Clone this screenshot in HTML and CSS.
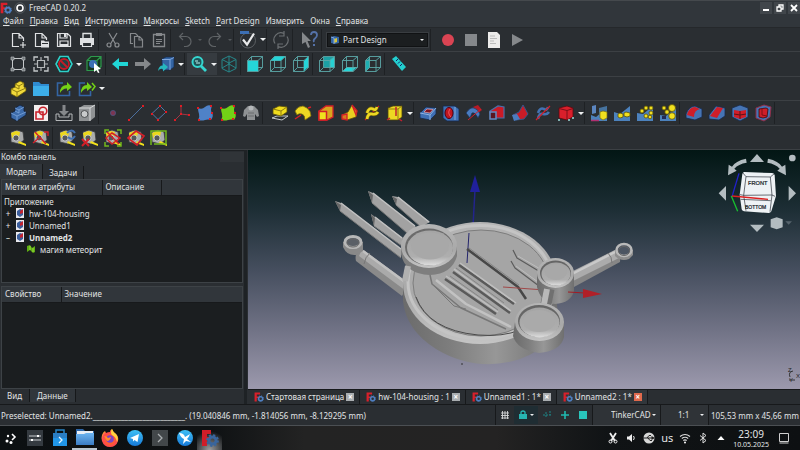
FILE: index.html
```html
<!DOCTYPE html>
<html lang="ru">
<head>
<meta charset="utf-8">
<title>FreeCAD 0.20.2</title>
<link rel="stylesheet" href="styles.css">
</head>
<body>
<svg class="defs" aria-hidden="true">
  <defs>
    <linearGradient id="sky" x1="0" y1="0" x2="0" y2="1"><stop offset="0" stop-color="#021614"/><stop offset=".25" stop-color="#1d2e35"/><stop offset=".5" stop-color="#454e5e"/><stop offset=".75" stop-color="#707285"/><stop offset="1" stop-color="#9c99ad"/></linearGradient>
    <linearGradient id="side" x1="0" y1="0" x2="1" y2="0"><stop offset="0" stop-color="#6b6b6b"/><stop offset=".3" stop-color="#7d7d7d"/><stop offset=".6" stop-color="#979797"/><stop offset="1" stop-color="#6f6f6f"/></linearGradient>
    <linearGradient id="rim" x1="0" y1="0" x2="0" y2="1"><stop offset="0" stop-color="#b5b5b5"/><stop offset=".6" stop-color="#a9a9a9"/><stop offset="1" stop-color="#c4c4c4"/></linearGradient>
    <linearGradient id="dish" x1="0" y1="0" x2="0" y2="1"><stop offset="0" stop-color="#a4a4a4"/><stop offset=".75" stop-color="#aeaeae"/><stop offset="1" stop-color="#dedede"/></linearGradient>
    <linearGradient id="orb" x1="0" y1="0" x2="0" y2="1"><stop offset="0" stop-color="#3fc0f5"/><stop offset="1" stop-color="#1679d8"/></linearGradient>
    <linearGradient id="folder" x1="0" y1="0" x2="0" y2="1"><stop offset="0" stop-color="#6db5f0"/><stop offset="1" stop-color="#3a7cc4"/></linearGradient>
    <radialGradient id="fox" cx=".5" cy=".6" r=".6"><stop offset=".2" stop-color="#ff6a1f"/><stop offset=".7" stop-color="#ff4550"/><stop offset="1" stop-color="#ffb92e"/></radialGradient>
  </defs>
  <symbol id="logo" viewBox="0 0 18 18"><path d="M1 1h10v3.500H5V8h4.500v3H5v6H1z" fill="#d8202b"/><circle cx="12" cy="12" r="3.600" fill="none" stroke="#4f7fc0" stroke-width="2.600"/><circle cx="12" cy="12" r="5" fill="none" stroke="#4f7fc0" stroke-width="1.600" stroke-dasharray="2 1.930"/></symbol>
  <symbol id="new" viewBox="0 0 18 18"><path d="M10 15.500H3.500v-13H10L14.500 7v3M10 2.500V7h4.500M14 11v6M11 14h6" fill="none" stroke="#dfe1e3" stroke-width="1.200"/></symbol>
  <symbol id="open" viewBox="0 0 18 18"><path d="M9 15.500H3.500v-13H10L14.500 7v2M10 2.500V7h4.500" fill="none" stroke="#dfe1e3" stroke-width="1.200"/><path d="M9 9.500h3l1 1h4v6H9z" fill="#dfe1e3"/><path d="M10 12.500h6" stroke="#2a2e32"/></symbol>
  <symbol id="save" viewBox="0 0 18 18"><path d="M2.500 2.500h10l3 3v10h-13zM5 2.500V7h7V2.500M5 15.500V10h8v5.500" fill="none" stroke="#dfe1e3" stroke-width="1.200"/><path d="M9 3h2v3H9zM5 13h8v2H5z" fill="#dfe1e3"/></symbol>
  <symbol id="print" viewBox="0 0 18 18"><path d="M5 7V2.500h8V7" fill="none" stroke="#dfe1e3" stroke-width="1.400"/><path d="M2 7h14v7h-2v-3H4v3H2z" fill="#dfe1e3"/><path d="M4.500 11.500h9v4h-9z" fill="none" stroke="#dfe1e3" stroke-width="1.200"/></symbol>
  <symbol id="cut" viewBox="0 0 18 18"><g fill="none" stroke="#8b8e91" stroke-width="1.200"><path d="M5 2l6.500 11M13 2L6.500 13"/><circle cx="5" cy="14" r="2"/><circle cx="13" cy="14" r="2"/></g></symbol>
  <symbol id="copy" viewBox="0 0 18 18"><path d="M6 12.500H3.500v-10h5L11 5M7.500 5.500h5l3 3v7.500h-8zM12 5.500V9h3.500" fill="none" stroke="#85888b" stroke-width="1.200"/></symbol>
  <symbol id="paste" viewBox="0 0 18 18"><path d="M3.500 3.500h11v12h-11z" fill="none" stroke="#85888b" stroke-width="1.300"/><path d="M6 2h6v3H6zM6 8h6v1H6zM6 10h6v1H6zM6 12h4v1H6z" fill="#85888b"/></symbol>
  <symbol id="undo" viewBox="0 0 18 18"><path d="M7 2L3.500 5.500 7 9M3.500 5.500H10a5 5 0 010 10H8" fill="none" stroke="#5f6366" stroke-width="1.200"/></symbol>
  <symbol id="redo" viewBox="0 0 18 18"><path d="M11 2l3.500 3.500L11 9M14.500 5.500H8a5 5 0 000 10h2" fill="none" stroke="#5f6366" stroke-width="1.200"/></symbol>
  <symbol id="check" viewBox="0 0 18 18"><circle cx="9" cy="9.500" r="7.500" fill="none" stroke="#5c6064"/><path d="M1 1.500h9" stroke="#3c6fb4" stroke-width="3"/><path d="M4 8.500l4 5 7-11" fill="none" stroke="#e9eaeb" stroke-width="2.200"/></symbol>
  <symbol id="refresh" viewBox="0 0 18 18"><path d="M3 12.500A7 7 0 0112 2.500M15 5.500a7 7 0 01-9 10M12 0v5h-5M6 18v-5h5" fill="none" stroke="#6b6f72" stroke-width="1.200"/></symbol>
  <symbol id="whats" viewBox="0 0 18 18"><path d="M1 1l9 9H6.500l2.500 6-2 1-2.500-6L1 13z" fill="#85888b"/><path d="M10 4q0-3 3-3t3 3q0 2-2 3.500T13 11" fill="none" stroke="#5572a8" stroke-width="1.800"/><path d="M12 13h2v2h-2z" fill="#5572a8"/></symbol>
  <symbol id="rec" viewBox="0 0 18 18"><circle cx="9" cy="9" r="6" fill="#da4453"/></symbol>
  <symbol id="stop" viewBox="0 0 18 18"><path d="M3 3h12v12H3z" fill="#85888b"/></symbol>
  <symbol id="macro" viewBox="0 0 18 18"><path d="M3 1h9l3 3v13H3z" fill="#ecebea"/><path d="M5 5h5M5 7.500h7M5 10h4M5 12.500h6" stroke="#bbb"/></symbol>
  <symbol id="play" viewBox="0 0 18 18"><path d="M4 3l11 6-11 6z" fill="#85888b"/></symbol>

  <symbol id="fit" viewBox="0 0 18 18"><path d="M3.500 3.500h11v11h-11z" fill="none" stroke="#c4c7c9"/><path d="M2 2h3v3H2zM13 2h3v3h-3zM2 13h3v3H2zM13 13h3v3h-3z" fill="#6f7578" stroke="#c4c7c9" stroke-width=".6"/></symbol>
  <symbol id="fitsel" viewBox="0 0 18 18"><path d="M2 6V2h4M12 2h4v4M16 12v4h-4M6 16H2v-4" fill="none" stroke="#c4c7c9" stroke-width="1.300"/><path d="M5.500 5.500h7v7h-7zM9 2v3M9 13v3M2 9h3M13 9h3" fill="none" stroke="#b4b7b9" stroke-width="1.200"/></symbol>
  <symbol id="draw" viewBox="0 0 18 18"><path d="M5 1.500h8L17 9l-4 7.500H5L1 9z" fill="#0d2a2b" stroke="#2fd0c8" stroke-width="1.600"/><circle cx="9" cy="9" r="5" fill="#1f4345" stroke="#c01c28" stroke-width="1.800"/><path d="M5.500 5.500l7 7" stroke="#c01c28" stroke-width="2"/></symbol>
  <symbol id="bbox" viewBox="0 0 18 18"><path d="M2 5.500h10v10H2zM2 5.500l4-4h10v10l-4 4M12 5.500l4-4" fill="#17351f" stroke="#2d9a4c" stroke-width="1.200"/><circle cx="8" cy="9" r="4" fill="#3c6fb4"/><path d="M9 8l7 6-3 .5 1.500 3-1.500.5-1.500-3L9 17z" fill="#fff"/></symbol>
  <symbol id="left" viewBox="0 0 18 18"><path d="M1 9l7-6v4h9v4H8v4z" fill="#20d6d6"/></symbol>
  <symbol id="right" viewBox="0 0 18 18"><path d="M17 9l-7-6v4H1v4h9v4z" fill="#85888b"/></symbol>
  <symbol id="goto" viewBox="0 0 18 18"><path d="M5 4l4-2h8v10l-4 3H5z" fill="#3465a4" stroke="#14284a" stroke-width=".7"/><path d="M5 4.500h8l4-2M13 4.500V15" fill="none" stroke="#7fa6dc"/><path d="M1 16q1-6 5-5.500V8l5 4-5 4.500V14q-3-1-5 2z" fill="#26b7bd"/></symbol>
  <symbol id="zoomv" viewBox="0 0 18 18"><circle cx="7.500" cy="7" r="5" fill="#1f5558" stroke="#35d6cf" stroke-width="2"/><path d="M11 11l5 5" stroke="#35d6cf" stroke-width="2.800"/><path d="M5 6h3M6 8h4" stroke="#b9f3f0"/></symbol>
  <symbol id="iso" viewBox="0 0 18 18"><path d="M9 1l7 3.500v9L9 17l-7-3.500v-9zM2 4.500L9 8l7-3.500M9 8v9M9 1v8l-7 4M9 9l7 4" fill="none" stroke="#27878a"/></symbol>
  <symbol id="wire" viewBox="0 0 18 18"><path d="M1.500 5.500h10.500v11H1.500zM1.500 5.500l4-4h11v11l-4.500 4M12 5.500l4.500-4M5.500 1.500v11h11M1.500 16.500l4-4" fill="none" stroke="#5ba8a8" stroke-width=".9"/></symbol>
  <symbol id="front" viewBox="0 0 18 18"><use href="#wire"/><path d="M2 6h10v10H2z" fill="#25d5d8"/></symbol>
  <symbol id="top" viewBox="0 0 18 18"><use href="#wire"/><path d="M2 5.500l4-4h10l-4 4z" fill="#25d5d8"/></symbol>
  <symbol id="rside" viewBox="0 0 18 18"><use href="#wire"/><path d="M12 6l4-4v10l-4 4z" fill="#25d5d8"/></symbol>
  <symbol id="rear" viewBox="0 0 18 18"><path d="M6 2h10v10H6z" fill="#1ca0a4"/><path d="M12 5l4-3v10h-4z" fill="#27d0d2"/><use href="#wire"/></symbol>
  <symbol id="bottom" viewBox="0 0 18 18"><path d="M2 16l4-4h10l-4 4z" fill="#25d5d8"/><use href="#wire"/></symbol>
  <symbol id="lside" viewBox="0 0 18 18"><path d="M2 6l4-4v10l-4 4z" fill="#1eafb2"/><use href="#wire"/></symbol>
  <symbol id="ruler" viewBox="0 0 18 18"><path d="M2 4l4-3 10 11-4 4z" fill="#23cfcf"/><path d="M6 6l2-2M8 8.500l2-2M10 11l2-2" stroke="#126"/></symbol>

  <symbol id="part" viewBox="0 0 18 18"><path d="M2 9l4-2V4l5-3 4 2v4l2 1v3l-9 6-6-3z" fill="#f1d93a" stroke="#5d5208" stroke-width=".8"/><path d="M2 9l6 3 9-4M8 12v5M6 4l4 2 5-3M10 6v3l-4-2" fill="none" stroke="#8f7d10"/></symbol>
  <symbol id="group" viewBox="0 0 18 18"><path d="M1 2h6l2 2h8v12H1z" fill="#2f8bd0"/><path d="M1 6h16v10H1z" fill="#3daee9"/></symbol>
  <symbol id="link" viewBox="0 0 18 18"><path d="M8 3H2.500v12.500h12V11" fill="none" stroke="#3465a4" stroke-width="1.600"/><path d="M5 13q0-8 7-8V2l5 5-5 4V8.500Q8 8 5 13z" fill="#73d216"/></symbol>
  <symbol id="link2" viewBox="0 0 18 18"><path d="M7 3H1.500v12.500h11V11" fill="none" stroke="#3465a4" stroke-width="1.600"/><path d="M3 13q0-8 6-8V2l5 5-5 4V8.500Q6 8 3 13z" fill="#73d216"/><path d="M14 3l3 3.500-3 4" fill="none" stroke="#73d216" stroke-width="1.500"/></symbol>

  <symbol id="body" viewBox="0 0 18 18"><path d="M2 9l4-2V4l5-3 4 2v4l2 1v3l-9 6-6-3z" fill="#3d6cab" stroke="#10203a" stroke-width=".8"/><path d="M2 9l6 3 9-4M8 12v5M6 4l4 2 5-3M10 6v3l-4-2" fill="none" stroke="#7ea6db" stroke-width=".8"/></symbol>
  <symbol id="sketch" viewBox="0 0 18 18"><path d="M2 1h14v16H2z" fill="#f2eeee"/><path d="M4 8h7v7H4z" fill="none" stroke="#c8202a" stroke-width="1.600"/><circle cx="11" cy="7" r="3.800" fill="none" stroke="#c8202a" stroke-width="1.600"/></symbol>
  <symbol id="import" viewBox="0 0 18 18"><path d="M1 10v6.500h16V10h-3v3H4v-3z" fill="none" stroke="#b4b7b9"/><path d="M7.500 1h3v6H14l-5 5-5-5h3.500z" fill="#85888b"/></symbol>
  <symbol id="shapes" viewBox="0 0 18 18"><path d="M1 4l5-3h11v12l-5 4H1z" fill="#8f9294"/><path d="M1 4h11v13M12 4l5-3" fill="none" stroke="#d6d8d9"/><circle cx="6.500" cy="10" r="3.500" fill="#c8cacb" stroke="#4d5052"/></symbol>
  <symbol id="point" viewBox="0 0 18 18"><circle cx="9" cy="9" r="2.600" fill="#7c3552" stroke="#4a5a88" stroke-width=".7"/></symbol>
  <symbol id="line" viewBox="0 0 18 18"><path d="M2 16L16 2" stroke="#4c6f9e"/><path d="M1 15h2v2H1zM15 1h2v2h-2z" fill="#e01b24"/></symbol>
  <symbol id="plane" viewBox="0 0 18 18"><path d="M2 9.500L10 2l6 6-8 7.500z" fill="none" stroke="#5277a6"/><path d="M1 9h2v2H1zM9 1h2v2H9zM15 7h2v2h-2zM7 15h2v2H7z" fill="#e01b24"/></symbol>
  <symbol id="axes" viewBox="0 0 18 18"><path d="M8 2v8l8 1M8 10l-6 6" fill="none" stroke="#a33644"/><path d="M7 1h2v2H7zM15 10h2v2h-2zM1 15h2v2H1zM7 9h2v2H7z" fill="#e01b24"/></symbol>
  <symbol id="blob" viewBox="0 0 18 18"><path d="M2 4q4 2 7-1t7-1q-2 4 0 7t-1 7q-3-1-6 0t-7 0q2-3 1-6t-1-6z"/><path d="M1 3h2v2H1zM14 1h2v2h-2zM15 8h2v2h-2zM2 15h2v2H2zM13 14h2v2h-2z" fill="#e01b24"/></symbol>
  <symbol id="clone" viewBox="0 0 18 18"><path d="M6 2h6l4 4 1 6-2 1-2-3v6H5v-6l-2 3-2-1 1-6z" fill="#8e9193"/><circle cx="9" cy="4" r="2.500" fill="#b5b8ba"/><path d="M6 9h6M6 12h6" stroke="#6a6d6f"/></symbol>

  <symbol id="pad" viewBox="0 0 18 18"><path d="M1 14l5-2h11l-6 4z" fill="none" stroke="#c3c7ca"/><path d="M2 5l6-3 8 1v5l-6 4-8-2z" fill="#f0dc1e" stroke="#5d5208" stroke-width=".8"/><path d="M2 5l8 2 6-4M10 7v5" fill="none" stroke="#8f7d10"/></symbol>
  <symbol id="revolve" viewBox="0 0 18 18"><path d="M1 15l6-4M14 4l3-1" stroke="#d21f28" stroke-width="1.400"/><path d="M1 7q3-5 8-5l4 2q4 3 4 8l-6 4q0-5-3-6-3-1-5 1z" fill="#edd823" stroke="#7e6c0b" stroke-width=".8"/></symbol>
  <symbol id="loft" viewBox="0 0 18 18"><path d="M2 7l7-5h7v11l-6 3H2z" fill="#d9a51f" stroke="#d21f28" stroke-width="1.300"/><path d="M2 7.500h7.500V16H2z" fill="#f0e21e" stroke="#d21f28" stroke-width="1.500"/></symbol>
  <symbol id="pipe" viewBox="0 0 18 18"><path d="M2 11l6-3 4-7 5 6-1 6-9 3-5-1z" fill="#e9cf22" stroke="#5d4a08" stroke-width=".7"/><path d="M2 11l5-1v6l-5-1zM12 1l5 6-1 4z" fill="#d9781f" stroke="#d21f28" stroke-width="1.300"/></symbol>
  <symbol id="helix" viewBox="0 0 18 18"><path d="M2 16L16 2" stroke="#d21f28" stroke-width="1.300"/><path d="M4 9q2-6 6-4 3 2 4-2M4 15q1-6 5-5t6-2" fill="none" stroke="#6d600a" stroke-width="3.800"/><path d="M4 9q2-6 6-4 3 2 4-2M4 15q1-6 5-5t6-2" fill="none" stroke="#edd823" stroke-width="2.600"/></symbol>
  <symbol id="cubeadd" viewBox="0 0 18 18"><path d="M2 4l5-2h9v11l-4 3H2z" fill="#edd823" stroke="#4d4408" stroke-width=".8"/><path d="M2 5h10v11M12 5l4-3" fill="none" stroke="#8f7d10"/><path d="M10 3v9M1 16l3-2M13 15l3 2" fill="none" stroke="#c22030" stroke-width="1.500"/></symbol>
  <symbol id="pocket" viewBox="0 0 18 18"><path d="M1 9l6-6 10 1v6l-6 6-10-2z" fill="#3f70b5" stroke="#16294a" stroke-width=".8"/><path d="M1 9l10 2 6-7M11 11v5" fill="none" stroke="#8db2e0"/><path d="M5 8l3-3 6 .5-3 3.500z" fill="#7e1420" stroke="#fbb" stroke-width=".6"/></symbol>
  <symbol id="hole" viewBox="0 0 18 18"><path d="M1 2h12l4 3v12H5l-4-3z" fill="#3f70b5" stroke="#16294a" stroke-width=".8"/><path d="M13 3v13" stroke="#85abdc"/><ellipse cx="7" cy="9" rx="4" ry="5.500" fill="#c11620" stroke="#501"/><path d="M8 5q-3 4 1 8" fill="none" stroke="#ef5560"/></symbol>
  <symbol id="groove" viewBox="0 0 18 18"><path d="M8 3l5-2 4 5-5 4z" fill="#b51a26"/><path d="M1 9q4-6 8-5 4 1 6 6l-2 4q-3-6-6-5l-2 5z" fill="#4a7cc0" stroke="#1a3258" stroke-width=".7"/><path d="M3 16L16 5" stroke="#d21f28"/></symbol>
  <symbol id="sloft" viewBox="0 0 18 18"><path d="M2 7l8-5 6 1v11H3z" fill="#cb1a26" stroke="#4a6fa8" stroke-width="1.200"/><path d="M2 8h6v7H2z" fill="#5b1520" stroke="#648ac4" stroke-width="1.500"/></symbol>
  <symbol id="spipe" viewBox="0 0 18 18"><path d="M2 11l6-3 4-7 5 9-4 5-8 1z" fill="#c81c27" stroke="#34568c"/><path d="M1 11l5-1 3 5-6 2z" fill="#4a7cc0"/></symbol>
  <symbol id="shelix" viewBox="0 0 18 18"><path d="M4 9q2-6 6-4 3 2 4-2M4 15q1-6 5-5t6-2" fill="none" stroke="#4272b2" stroke-width="2.600"/><path d="M2 16L16 2" stroke="#d21f28" stroke-width="1.300"/></symbol>
  <symbol id="cubesub" viewBox="0 0 18 18"><path d="M2 4l8-2 6 2v9l-6 3-8-2z" fill="#d91f2b" stroke="#5a0a10" stroke-width=".8"/><path d="M2 4.500l8 2 6-2M10 6.500V16" fill="none" stroke="#7a1018"/><path d="M1 15h2v2H1zM11 15h2v2h-2zM15 13h2v2h-2z" fill="#7fb0b0"/></symbol>
  <symbol id="base" viewBox="0 0 18 18"><path d="M1 17v-6l5 2 6-5 5-1v10z" fill="#4c82bd"/><path d="M9 4l8-2v8H9z" fill="#46739f"/><path d="M2 2l4-1v8L2 10z" fill="#5b86c0"/></symbol>
  <symbol id="mirror" viewBox="0 0 18 18"><use href="#base"/><path d="M1 16.500h8" stroke="#b03070" stroke-width="1.500"/><path d="M10 8l3-1 4 1v6l-4 2-3-2z" fill="#f1e01f" stroke="#7c6d08" stroke-width=".7"/></symbol>
  <symbol id="linpat" viewBox="0 0 18 18"><path d="M1 17V8l6 2 10-8v15z" fill="#4c82bd"/><path d="M5 10l2-1 3 1v3l-3 1-2-1zM11 9l2-1 4 1v3l-3 1-3-1z" fill="#f1e01f" stroke="#5d5208" stroke-width=".8"/></symbol>
  <symbol id="polpat" viewBox="0 0 18 18"><path d="M1 17V9l6 1 10-8v15z" fill="#4c82bd"/><g fill="#f1e01f" stroke="#5d5208" stroke-width=".8"><circle cx="6" cy="7" r="2"/><circle cx="10" cy="4" r="2"/><circle cx="15" cy="4" r="2"/><circle cx="15" cy="9" r="2"/><circle cx="10" cy="12" r="2"/><circle cx="14" cy="13" r="1.800"/></g></symbol>
  <symbol id="multi" viewBox="0 0 18 18"><path d="M1 17v-6l6 1 10-8v13z" fill="#4c82bd"/><g fill="#f1e01f" stroke="#5d5208" stroke-width=".8"><circle cx="13" cy="4" r="3.500"/><circle cx="5" cy="4" r="2"/><circle cx="8" cy="8" r="2.200"/><circle cx="13" cy="12" r="3.300"/></g><path d="M3 12h4v3H3z" fill="#222a55"/></symbol>
  <symbol id="fillet" viewBox="0 0 18 18"><path d="M1 10q3-8 9-8l7 3v8l-7 3-9-2z" fill="#4674b4" stroke="#17294a" stroke-width=".8"/><path d="M2 11q2-8 8-8l5 2q-6 1-6 8z" fill="#cf1e29"/></symbol>
  <symbol id="chamfer" viewBox="0 0 18 18"><path d="M1 11l7-9 9 2v8l-6 4-10-1z" fill="#4674b4" stroke="#17294a" stroke-width=".8"/><path d="M2 12l7-9 6 1-6 10z" fill="#cf1e29"/></symbol>
  <symbol id="draft" viewBox="0 0 18 18"><path d="M1 4l8-3 8 3v9l-8 4-8-4z" fill="#4674b4" stroke="#17294a" stroke-width=".8"/><path d="M3 6l6 1 6-1v7l-6 2-6-2z" fill="#cf1e29"/><path d="M9 7v8M3 10l6 1 6-1" stroke="#5d1016" fill="none"/></symbol>
  <symbol id="thick" viewBox="0 0 18 18"><path d="M2 4l8-3 7 2-1 10-6 4-8-3z" fill="#4674b4" stroke="#9a2a44" stroke-width=".9"/><path d="M5 5l7-1 2 1-1 8-4 1-4-1z" fill="#cf1e29" stroke="#3a0a10" stroke-width=".8"/><path d="M8 4v7l5 1" stroke="#7a1018" fill="none"/></symbol>

  <symbol id="tape" viewBox="0 0 18 18"><path d="M2 3l6-2 6 2 1 8-5 4-8-2z" fill="#a9abac" stroke="#383a3c" stroke-width=".8"/><path d="M2 4l5-2 4 1-1 5-7 1z" fill="#ecd81c"/><circle cx="7" cy="9" r="3" fill="#55585a" stroke="#ddd" stroke-width=".7"/><path d="M10 12l7 3v2l-8-3z" fill="#f2e21c"/></symbol>
  <symbol id="tapeang" viewBox="0 0 18 18"><use href="#tape"/><path d="M3 3l11 12M1 14l6-5M12 3h4v4" fill="none" stroke="#d21f28" stroke-width="1.400"/></symbol>
  <symbol id="taperef" viewBox="0 0 18 18"><use href="#tape"/><path d="M9 4q5-5 8 0M17 7q-3 5-7 1" fill="none" stroke="#4272b2" stroke-width="2"/></symbol>
  <symbol id="tapedel" viewBox="0 0 18 18"><use href="#tape"/><path d="M1 10l7 7M8 10l-7 7" stroke="#d21f28" stroke-width="2"/></symbol>
  <symbol id="tapeall" viewBox="0 0 18 18"><use href="#tape"/><path d="M1 5V1h4M13 1h4v4M17 13v4h-4M5 17H1v-4" fill="none" stroke="#73b81c" stroke-width="1.500"/><path d="M2 9l6-5 8 5-8 6zM3 3l12 12" fill="none" stroke="#d21f28" stroke-width="1.500"/></symbol>
  <symbol id="tape3d" viewBox="0 0 18 18"><use href="#tape"/><path d="M1 9l8-7 8 5-7 9z" fill="none" stroke="#d21f28" stroke-width="1.700"/></symbol>
  <symbol id="tapedelta" viewBox="0 0 18 18"><use href="#tape"/><path d="M1 16V2h15v13H4" fill="none" stroke="#73b81c" stroke-width="1.500"/></symbol>

  <symbol id="doc" viewBox="0 0 10 10"><path d="M1 0h8v10H1z" fill="#e9e9ee"/><path d="M2 3l3-2 3 1v5L5 9 2 7z" fill="#3d5f9d"/><path d="M5 3l3-2v4L5 6z" fill="#c32431"/></symbol>
  <symbol id="mesh" viewBox="0 0 10 10"><path d="M1 2l3-1 2 3 3-2v6L7 9 4 6 1 8z" fill="#5fae12"/><path d="M4 2v4M7 4v4" stroke="#a9e653" stroke-width=".8"/></symbol>
</svg>

<header class="titlebar">
  <svg class="ic12"><use href="#logo"/></svg>
  <svg class="ic12" viewBox="0 0 12 12"><circle cx="6" cy="6" r="3" fill="none" stroke="#fff" stroke-width="1.600"/><circle cx="6" cy="6" r="5.300" fill="none" stroke="#50565b"/></svg>
  <h1>FreeCAD 0.20.2</h1>
  <div class="winbtns">
    <button aria-label="Свернуть"><svg viewBox="0 0 12 12"><path d="M3 8h6" stroke="#fff" stroke-width="2"/></svg></button>
    <button aria-label="Восстановить"><svg viewBox="0 0 12 12"><path d="M5 4.500V3h4v4H7.500M3 5h4v4H3z" fill="none" stroke="#fff" stroke-width="1.300"/></svg></button>
    <button aria-label="Закрыть"><svg viewBox="0 0 12 12"><path d="M3 3l6 6M9 3l-6 6" stroke="#fff" stroke-width="1.800"/></svg></button>
  </div>
</header>

<nav class="menubar">
  <button><u>Ф</u>айл</button><button><u>П</u>равка</button><button><u>В</u>ид</button><button><u>И</u>нструменты</button><button><u>М</u>акросы</button><button><u>S</u>ketch</button><button><u>P</u>art Design</button><button>Измерить</button><button>Окна</button><button><u>С</u>правка</button>
</nav>

<section class="toolbars">
  <div class="row">
    <button class="tb" aria-label="Создать"><svg><use href="#new"/></svg></button>
    <button class="tb" aria-label="Открыть"><svg><use href="#open"/></svg></button>
    <button class="tb" aria-label="Сохранить"><svg><use href="#save"/></svg></button>
    <button class="tb" aria-label="Печать"><svg><use href="#print"/></svg></button>
    <i class="sep"></i>
    <button class="tb" aria-label="Вырезать"><svg><use href="#cut"/></svg></button>
    <button class="tb" aria-label="Копировать"><svg><use href="#copy"/></svg></button>
    <button class="tb" aria-label="Вставить"><svg><use href="#paste"/></svg></button>
    <i class="sep"></i>
    <button class="tb" aria-label="Отменить"><svg><use href="#undo"/></svg></button><button class="drop dim" aria-label="История отмены"></button>
    <button class="tb" aria-label="Повторить"><svg><use href="#redo"/></svg></button><button class="drop dim" aria-label="История повтора"></button>
    <i class="sep"></i>
    <button class="tb" aria-label="Правка"><svg><use href="#check"/></svg></button><button class="drop" aria-label="Режим правки"></button>
    <i class="sep"></i>
    <button class="tb" aria-label="Обновить"><svg><use href="#refresh"/></svg></button>
    <i class="grip"></i>
    <button class="tb" aria-label="Что это?"><svg><use href="#whats"/></svg></button>
    <i class="grip"></i>
    <div class="combo">
      <svg class="ic10" viewBox="0 0 10 10"><path d="M1 2l3-1 5 1v6L5 9 1 8z" fill="#3465a4"/><path d="M4 4l3-1v4L4 8z" fill="#d9c63a"/><path d="M1 2l3 1v6" fill="none" stroke="#7fa6dc"/></svg>
      <select aria-label="Верстак"><option>Part Design</option></select>
    </div>
    <i class="grip"></i>
    <button class="tb" aria-label="Запись макроса"><svg><use href="#rec"/></svg></button>
    <button class="tb" aria-label="Остановить"><svg><use href="#stop"/></svg></button>
    <button class="tb" aria-label="Макросы"><svg><use href="#macro"/></svg></button>
    <button class="tb" aria-label="Выполнить"><svg><use href="#play"/></svg></button>
  </div>
  <div class="row">
    <button class="tb" aria-label="Показать всё"><svg><use href="#fit"/></svg></button>
    <button class="tb" aria-label="Показать выделенное"><svg><use href="#fitsel"/></svg></button>
    <button class="tb" aria-label="Стиль"><svg><use href="#draw"/></svg></button><button class="drop" aria-label="Выбор стиля"></button>
    <button class="tb" aria-label="Габариты"><svg><use href="#bbox"/></svg></button>
    <i class="sep"></i>
    <button class="tb" aria-label="Назад"><svg><use href="#left"/></svg></button>
    <button class="tb" aria-label="Вперёд"><svg><use href="#right"/></svg></button>
    <button class="tb" aria-label="К объекту"><svg><use href="#goto"/></svg></button><button class="drop" aria-label="Переходы"></button>
    <i class="sep"></i>
    <button class="tb on" aria-label="Синхронизация"><svg><use href="#zoomv"/></svg></button><button class="drop on" aria-label="Режим синхронизации"></button>
    <button class="tb" aria-label="Изометрия"><svg><use href="#iso"/></svg></button>
    <i class="sep"></i>
    <button class="tb" aria-label="Спереди"><svg><use href="#front"/></svg></button>
    <button class="tb" aria-label="Сверху"><svg><use href="#top"/></svg></button>
    <button class="tb" aria-label="Справа"><svg><use href="#rside"/></svg></button>
    <i class="sep"></i>
    <button class="tb" aria-label="Сзади"><svg><use href="#rear"/></svg></button>
    <button class="tb" aria-label="Снизу"><svg><use href="#bottom"/></svg></button>
    <button class="tb" aria-label="Слева"><svg><use href="#lside"/></svg></button>
    <i class="sep"></i>
    <button class="tb" aria-label="Расстояние"><svg><use href="#ruler"/></svg></button>
  </div>
  <div class="row">
    <button class="tb" aria-label="Деталь"><svg><use href="#part"/></svg></button>
    <button class="tb" aria-label="Группа"><svg><use href="#group"/></svg></button>
    <button class="tb" aria-label="Ссылка"><svg><use href="#link"/></svg></button>
    <button class="tb" aria-label="Действия"><svg><use href="#link2"/></svg></button><button class="drop" aria-label="Действия со ссылкой"></button>
  </div>
  <div class="row">
    <button class="tb" aria-label="Тело"><svg><use href="#body"/></svg></button>
    <button class="tb" aria-label="Эскиз"><svg><use href="#sketch"/></svg></button>
    <button class="tb" aria-label="Прикрепить"><svg><use href="#import"/></svg></button>
    <button class="tb" aria-label="Проверить"><svg><use href="#shapes"/></svg></button>
    <i class="sep"></i>
    <button class="tb" aria-label="Точка"><svg><use href="#point"/></svg></button>
    <button class="tb" aria-label="Линия"><svg><use href="#line"/></svg></button>
    <button class="tb" aria-label="Плоскость"><svg><use href="#plane"/></svg></button>
    <button class="tb" aria-label="Оси"><svg><use href="#axes"/></svg></button>
    <button class="tb blue" aria-label="Связка"><svg><use href="#blob"/></svg></button>
    <button class="tb green" aria-label="Подсвязка"><svg><use href="#blob"/></svg></button>
    <button class="tb" aria-label="Клон"><svg><use href="#clone"/></svg></button>
    <i class="grip"></i>
    <button class="tb" aria-label="Выдавить"><svg><use href="#pad"/></svg></button>
    <button class="tb" aria-label="Вращение"><svg><use href="#revolve"/></svg></button>
    <button class="tb" aria-label="Лофт"><svg><use href="#loft"/></svg></button>
    <button class="tb" aria-label="Труба"><svg><use href="#pipe"/></svg></button>
    <button class="tb" aria-label="Спираль"><svg><use href="#helix"/></svg></button>
    <button class="tb" aria-label="Примитив"><svg><use href="#cubeadd"/></svg></button><button class="drop" aria-label="Примитивы"></button>
    <i class="sep"></i>
    <button class="tb" aria-label="Карман"><svg><use href="#pocket"/></svg></button>
    <button class="tb" aria-label="Отверстие"><svg><use href="#hole"/></svg></button>
    <button class="tb" aria-label="Канавка"><svg><use href="#groove"/></svg></button>
    <button class="tb" aria-label="Вычесть лофт"><svg><use href="#sloft"/></svg></button>
    <button class="tb" aria-label="Вычесть трубу"><svg><use href="#spipe"/></svg></button>
    <button class="tb" aria-label="Вычесть спираль"><svg><use href="#shelix"/></svg></button>
    <button class="tb" aria-label="Вычесть примитив"><svg><use href="#cubesub"/></svg></button><button class="drop" aria-label="Вычитаемые примитивы"></button>
    <i class="sep"></i>
    <button class="tb" aria-label="Симметрия"><svg><use href="#mirror"/></svg></button>
    <button class="tb" aria-label="Линейный массив"><svg><use href="#linpat"/></svg></button>
    <button class="tb" aria-label="Круговой массив"><svg><use href="#polpat"/></svg></button>
    <button class="tb" aria-label="Множественное"><svg><use href="#multi"/></svg></button>
    <i class="sep"></i>
    <button class="tb" aria-label="Скругление"><svg><use href="#fillet"/></svg></button>
    <button class="tb" aria-label="Фаска"><svg><use href="#chamfer"/></svg></button>
    <button class="tb" aria-label="Уклон"><svg><use href="#draft"/></svg></button>
    <button class="tb" aria-label="Толщина"><svg><use href="#thick"/></svg></button>
    <i class="sep"></i>
  </div>
  <div class="row">
    <button class="tb" aria-label="Линейное измерение"><svg><use href="#tape"/></svg></button>
    <button class="tb" aria-label="Угловое измерение"><svg><use href="#tapeang"/></svg></button>
    <i class="sep"></i>
    <button class="tb" aria-label="Обновить измерения"><svg><use href="#taperef"/></svg></button>
    <button class="tb" aria-label="Очистить измерения"><svg><use href="#tapedel"/></svg></button>
    <button class="tb" aria-label="Переключить всё"><svg><use href="#tapeall"/></svg></button>
    <button class="tb" aria-label="Переключить 3D"><svg><use href="#tape3d"/></svg></button>
    <button class="tb" aria-label="Переключить дельту"><svg><use href="#tapedelta"/></svg></button>
  </div>
</section>

<main class="work">
  <aside class="panel">
    <div class="panelhead"><h2>Комбо панель</h2><span class="dock"></span></div>
    <div class="tabs"><button class="cur">Модель</button><button>Задачи</button></div>
    <div class="tree">
      <table>
        <thead><tr><th class="c1">Метки и атрибуты</th><th class="c2">Описание</th><th></th></tr></thead>
        <tbody>
          <tr><td colspan="3">Приложение</td></tr>
          <tr><td colspan="3"><span class="node"><b class="tw">+</b><svg class="ic10"><use href="#doc"/></svg>hw-104-housing</span></td></tr>
          <tr><td colspan="3"><span class="node"><b class="tw">+</b><svg class="ic10"><use href="#doc"/></svg>Unnamed1</span></td></tr>
          <tr><td colspan="3"><span class="node bold"><b class="tw">–</b><svg class="ic10"><use href="#doc"/></svg>Unnamed2</span></td></tr>
          <tr><td colspan="3"><span class="node child"><svg class="ic10"><use href="#mesh"/></svg>магия метеорит</span></td></tr>
        </tbody>
      </table>
    </div>
    <div class="props">
      <table><thead><tr><th class="p1">Свойство</th><th>Значение</th></tr></thead></table>
    </div>
    <div class="tabs low"><button>Вид</button><button class="cur">Данные</button></div>
  </aside>

  <section class="stage">
    <svg class="view" viewBox="248 150 552 239" preserveAspectRatio="xMidYMid slice" role="img" aria-label="Модель">
      <rect x="248" y="150" width="552" height="239" fill="url(#sky)"/>
      <path d="M475 190l-2 36" stroke="#23248c" stroke-width="1.500"/><path d="M475 175l5 17h-10z" fill="#20209c"/>
      <g>
        <path d="M361 249l48 35-7 12-46-35q-2-8 5-12z" fill="#8a8a8a"/><path d="M362 249l48 35-4 7-47-35z" fill="#aaa"/><path d="M363 251l46 34" stroke="#c0c0c0" stroke-width="2.500"/>
        <path d="M571 273l44-23q6 4 5 12l-46 25z" fill="#868686"/><path d="M571 272l44-22 4 8-46 23z" fill="#ababab"/><path d="M572 274l43-22" stroke="#c9c9c9" stroke-width="2.500"/>
      </g>
      <path d="M370 253q-5 4-6 11M608 253q4 4 4 10" fill="none" stroke="#777"/>
      <path d="M343 242v5q4 9 13 8l7-4v-9z" fill="#898989"/><ellipse cx="353" cy="242" rx="8" ry="5.500" fill="#5a5f66" stroke="#b8b8b8" stroke-width="3"/><ellipse cx="353" cy="243" rx="6" ry="4" fill="none" stroke="#666"/>
      <path d="M615 251v5q6 6 14 3l4-4v-5z" fill="#8d8d8d"/><ellipse cx="624" cy="250" rx="7.500" ry="6" fill="#4c5562" stroke="#b9b9b9" stroke-width="2.500"/><ellipse cx="624" cy="251" rx="5.500" ry="4.500" fill="none" stroke="#666"/>
      <g fill="#a2a2a2">
        <path d="M335 201l6 2 60 46v9l-61-47z"/><path d="M368 191l5 2 43 34-9 6-35-30z"/><path d="M392 196l6 1 32 25-9 5-25-22z"/><path d="M371 214l4 3 28 21-1 8-28-20z"/>
      </g>
      <path d="M341 203l60 46M373 193l42 33M398 197l31 25M375 217l27 21" stroke="#c2c2c2" stroke-width="1.500" fill="none"/>
      <path d="M340 211l61 47M372 203l35 30M396 205l25 22M374 226l28 20" fill="none" stroke="#7a7a7a"/>
      <path d="M335 201l5 10 1-6zM368 191l4 12 1-8zM392 196l4 9 1-6zM371 214l3 12 1-8z" fill="#666"/>
      <path d="M403 283v18q3 29 33 48 40 24 84 10 42-15 37-54v-22z" fill="url(#side)"/>
      <ellipse cx="480" cy="283" rx="77" ry="61" fill="url(#rim)"/>
      <ellipse cx="480" cy="282" rx="72" ry="56.500" fill="none" stroke="#c4c4c4" stroke-width="3"/>
      <ellipse cx="481" cy="283" rx="68" ry="53" fill="#a5a5a5" stroke="#7d7d7d"/>
      <path d="M416 297q12 33 62 38 25 2 42-5" fill="none" stroke="#4a4a4a"/>
      <path d="M469 233l-2 30" stroke="#23246c"/>
      <g fill="none" stroke-linejoin="round">
        <path d="M467 249l51 38 8 12" stroke="#474747" stroke-width="2.500"/><path d="M469 248l50 37" stroke="#858585"/>
        <path d="M459 265l55 39M453 272l57 41M445 279l51 35" stroke="#5a5a5a" stroke-width="2.500"/>
        <path d="M460 263l56 40M454 269l57 42M446 276l52 36" stroke="#bfbfbf" stroke-width="1.500"/>
        <path d="M456 268l48 35M450 276l48 34" stroke="#858585"/>
        <path d="M430 275l2 9 29 24 45 21" stroke="#777" stroke-width="1.500"/><path d="M436 280l30 24 45 23" stroke="#c2c2c2" stroke-width="2.500"/><path d="M432 284l22 22 12 3" stroke="#777"/>
        <path d="M513 250l4 8 25 15M511 261l4 7 24 18" stroke="#5b5b5b" stroke-width="1.200"/><path d="M518 256l24 14M516 266l22 16" stroke="#bdbdbd"/>
      </g>
      <path d="M503 287l42 3" stroke="#a04848"/>
      <path d="M401 246v8q4 20 29 21 22-1 27-19v-10z" fill="#7e7e7e"/>
      <ellipse cx="429" cy="246" rx="28" ry="22" fill="url(#rim)"/><ellipse cx="429" cy="247" rx="24" ry="18.500" fill="#6b6b6b"/><ellipse cx="430" cy="248" rx="23" ry="17.500" fill="url(#dish)"/><ellipse cx="430" cy="246" rx="19" ry="13.500" fill="#a8a8a8"/>
      <path d="M408 266l-3 15" stroke="#b0b0b0" stroke-width="6"/>
      <path d="M537 273v14q4 16 18 17 16-1 19-13v-18z" fill="url(#side)"/>
      <ellipse cx="555.500" cy="273" rx="18.500" ry="15" fill="url(#rim)"/><ellipse cx="555.500" cy="273" rx="15.500" ry="12.500" fill="#656565"/><ellipse cx="556" cy="274" rx="14.500" ry="11.500" fill="url(#dish)"/><ellipse cx="556" cy="272" rx="11" ry="8" fill="#a8a8a8"/>
      <path d="M549 289l-3 15" stroke="#707070" stroke-width="11"/><path d="M547 289l-3 15" stroke="#b9b9b9" stroke-width="6"/>
      <path d="M515 322l-2 14q4 14 26 17 22-2 25-16v-15z" fill="url(#side)"/>
      <ellipse cx="539.500" cy="322" rx="24.500" ry="19" fill="url(#rim)"/><ellipse cx="539" cy="321" rx="21" ry="16" fill="#666"/><ellipse cx="539.500" cy="322.500" rx="20" ry="15" fill="url(#dish)"/><ellipse cx="539" cy="321" rx="16" ry="11" fill="#aaa"/>
      <path d="M568 292l17 1" stroke="#a31c24"/><path d="M583 289l19 5-19 4z" fill="#b02028"/>
      <path d="M462 363v2" stroke="#333"/>
      <g transform="translate(710 150) scale(.3333)">
        <g fill="#b3bcc0"><path d="M141 12l21 24h-42zM141 246l-21-22h42zM26 130l22-22v44zM258 130l-22-22v44z"/><path d="M108 26Q76 33 66 50l-10-6-2 32 26-14-7-6q12-14 37-18zM174 26q32 7 42 24l10-6 2 32-26-14 7-6q-12-14-37-18z"/><circle cx="247" cy="24" r="10"/><path d="M182 208l18-6 18 6v24l-18 6-18-6z"/><path d="M226 214h20l-10 10z" fill="#56636c"/></g>
        <path d="M103 66l83 3q6 0 8 6l4 63-14 46q-3 5-8 5l-74-5q-6-1-7-6l-6-44 8-62q2-6 6-6z" fill="#eef2f5"/>
        <path d="M98 68l10 12-7 56 7 46M108 80l73 1 11-9M181 81l5 54-6 50M90 134l11 2 85-1 9 4M92 148l90 4" fill="none" stroke="#242b33" stroke-width="2"/>
        <path d="M87 70L66 140" stroke="#2222cc" stroke-width="4"/><path d="M66 138l108 10" stroke="#dd2020" stroke-width="4"/><path d="M64 138l19 46" stroke="#18c030" stroke-width="4"/>
        <text x="114" y="105" class="cubetext" font-size="17">FRONT</text><text x="105" y="177" class="cubetext" font-size="15">BOTTOM</text>
      </g>
      <path d="M793 371q-5 1-3 6M789 380h6" fill="none" stroke="#333"/><g class="axistext"><text x="788" y="372">Z</text><text x="789" y="382">Y</text><text x="796" y="378">X</text></g>
    </svg>
    <div class="doctabs">
      <div class="doctab"><svg class="ic10"><use href="#logo"/></svg><a href="#start">Стартовая страница</a><button aria-label="Закрыть вкладку">×</button></div>
      <div class="doctab"><svg class="ic10"><use href="#logo"/></svg><a href="#hw">hw-104-housing : 1</a><button aria-label="Закрыть вкладку">×</button></div>
      <div class="doctab"><svg class="ic10"><use href="#logo"/></svg><a href="#u1">Unnamed1 : 1*</a><button aria-label="Закрыть вкладку">×</button></div>
      <div class="doctab cur"><svg class="ic10"><use href="#logo"/></svg><a href="#u2">Unnamed2 : 1*</a><button aria-label="Закрыть вкладку">×</button></div>
    </div>
  </section>
</main>

<section class="status">
  <p>Preselected: Unnamed2.__________________________. (19.040846 mm, -1.814056 mm, -8.129295 mm)</p>
  <div class="snaps">
    <button aria-label="Сетка"><svg viewBox="0 0 10 10"><path d="M1 3h8M1 5.500h8M1 8h8M2.500 1v8M5 1v8M7.500 1v8" stroke="#d5d7d8" stroke-width=".9"/></svg></button>
    <button class="lock" aria-label="Привязка"><svg viewBox="0 0 10 10"><path d="M1 4h8v5H1z" fill="#27b4b2"/><path d="M3 4V2q2-2 4 0v2" fill="none" stroke="#27b4b2" stroke-width="1.300"/></svg><i></i></button>
    <button aria-label="Ортогонально"><svg viewBox="0 0 10 10"><path d="M1 5h8M4 2v5M8 1v4" stroke="#1d8687" stroke-dasharray="2 1"/></svg></button>
    <button aria-label="Пересечение"><svg viewBox="0 0 10 10"><path d="M1 5h8M5 1v8" stroke="#20b8b0" stroke-width="1.600"/></svg></button>
    <button aria-label="Плоскость"><svg viewBox="0 0 10 10"><path d="M1 1h8v8H1z" fill="#29c4bb"/></svg></button>
  </div>
  <div class="pick nav"><select aria-label="Навигация"><option>TinkerCAD</option></select></div>
  <div class="pick scale"><select aria-label="Масштаб"><option>1:1</option></select></div>
  <output>105,53 mm x 45,66 mm</output>
</section>

<footer class="taskbar">
  <div class="apps">
    <button aria-label="Меню"><svg viewBox="0 0 18 18"><g fill="#fff"><circle cx="6" cy="7" r="1.200"/><circle cx="5" cy="12" r="1.500"/><circle cx="9" cy="13.500" r="1.500"/></g><path d="M10 5l3 3-3 3" fill="none" stroke="#fff" stroke-width="1.600"/></svg></button>
    <button aria-label="Параметры"><svg viewBox="0 0 18 18"><path d="M1 1h16v16H1z" fill="#343a40"/><path d="M3 7h12M3 11h12" stroke="#c8ccd0"/><path d="M11 6h2v2h-2zM5 10h2v2H5z" fill="#fff"/></svg></button>
    <button aria-label="Магазин"><svg viewBox="0 0 18 18"><path d="M5 5V1h8v4" fill="none" stroke="#2685c9" stroke-width="1.500"/><path d="M2 4h14v13H2z" fill="#2196e8"/><path d="M2 4h14v5H2z" fill="#2a7ec4"/><path d="M8 8l3 3-3 3" fill="none" stroke="#e6f6ff" stroke-width="1.300"/></svg></button>
    <button class="open" aria-label="Файлы"><svg viewBox="0 0 18 18"><path d="M0 1h7l2 2h9v14H0z" fill="#2d66a8"/><path d="M1 3h16v3H1z" fill="#e8eef5"/><path d="M0 6h8l2-1h8v12H0z" fill="url(#folder)"/></svg></button>
    <button aria-label="Firefox"><svg viewBox="0 0 18 18"><path d="M1 6q1-3 3-4l1 2q2-1 4-1 0-2 2-3 1 3 4 5 3 3 2 7-2 6-8 6T1 12q-1-3 0-6z" fill="url(#fox)"/><path d="M11 0q1 3 4 5 3 4 1 8-1-5-5-7-2-2 0-6z" fill="#ffd23e"/><circle cx="9" cy="10" r="3.800" fill="#7b43c5"/><path d="M3 7q3 0 4 2l3-1q-1 4-4 4z" fill="#ff8b2b"/></svg></button>
    <button aria-label="Telegram"><svg viewBox="0 0 18 18"><circle cx="9" cy="9" r="8" fill="url(#orb)"/><path d="M4 9l9-4-1.500 8-3-2-1.500 1.500V10z" fill="#fff"/></svg></button>
    <button aria-label="Терминал"><svg viewBox="0 0 18 18"><path d="M1 1h16v16H1z" fill="#42474a"/><path d="M7 5l4 4-4 4" fill="none" stroke="#a8adb0" stroke-width="1.300"/></svg></button>
    <button aria-label="Falkon"><svg viewBox="0 0 18 18"><circle cx="9" cy="9" r="8" fill="url(#orb)"/><path d="M3 4q5 0 6 4l5-3q-1 3-3 5l4 3-5-1-3 3 1-5q-3-1-5-6z" fill="#fff"/></svg></button>
    <button class="active" aria-label="FreeCAD"><svg viewBox="0 0 18 18"><path d="M1 1h9v4H6v3h3v3H6v6H1z" fill="#cf1d28"/><circle cx="11.500" cy="11.500" r="3.600" fill="none" stroke="#39659c" stroke-width="3"/><circle cx="11.500" cy="11.500" r="5.500" fill="none" stroke="#39659c" stroke-width="1.800" stroke-dasharray="2.300 2"/></svg></button>
  </div>
  <div class="tray">
    <button aria-label="Буфер обмена"><svg viewBox="0 0 12 12"><path d="M3 1l5 8M9 1L4 9" stroke="#eee" stroke-width="1.800"/><circle cx="3.500" cy="9.500" r="1.500" fill="none" stroke="#eee"/><circle cx="8.500" cy="9.500" r="1.500" fill="none" stroke="#eee"/></svg></button>
    <button aria-label="Звук"><svg viewBox="0 0 12 12"><path d="M2 4.500h2L7 2v8L4 7.500H2z" fill="#eee"/><path d="M8.500 4q1.500 2 0 4" fill="none" stroke="#eee"/></svg></button>
    <button aria-label="Устройства"><svg viewBox="0 0 12 12"><circle cx="6" cy="6" r="5.500" fill="#d8d8d8"/><path d="M0 6h9M4 6l2-2.500h2M5 6l2 2.500h2" fill="none" stroke="#222"/><path d="M8.500 4L12 6 8.500 8z" fill="#222"/></svg></button>
    <button class="lang">us</button>
    <button aria-label="Сеть"><svg viewBox="0 0 12 12"><path d="M1 4.500q5-4 10 0M2.800 6.500q3.200-2.500 6.400 0M4.300 8.500q1.700-1.300 3.400 0" fill="none" stroke="#ddd" stroke-width="1.100"/><circle cx="6" cy="10.500" r="1" fill="#fff"/></svg></button>
    <button aria-label="Bluetooth"><svg viewBox="0 0 12 12"><path d="M3 3.500l6 5L6 11V1l3 2.500-6 5" fill="none" stroke="#ddd"/></svg></button>
    <button aria-label="Скрытые значки"><svg viewBox="0 0 12 12"><path d="M2.500 8L6 4l3.500 4z" fill="#fff"/></svg></button>
    <time><b>23:09</b><span>10.05.2025</span></time>
    <button aria-label="Рабочий стол"><svg viewBox="0 0 12 12"><path d="M1.500 1.500h9v8h-9zM1.500 11h9" fill="none" stroke="#cfcfcf"/></svg></button>
  </div>
</footer>
</body>
</html>
```
FILE: styles.css
```css
* { box-sizing: border-box; }
body {
  margin: 0;
  min-height: 100vh;
  display: flex;
  flex-direction: column;
  background: #2a2e32;
  color: #e2e4e5;
  font: 8px/12px "Noto Sans", sans-serif;
  overflow: hidden;
}
h1, h2, p { margin: 0; font-size: inherit; font-weight: 400; }
button, select { font: inherit; color: inherit; background: none; border: 0; padding: 0; margin: 0; }
a { color: inherit; text-decoration: none; }
svg { display: block; flex: none; }
.defs { position: absolute; width: 0; height: 0; }
.ic12 { width: 12px; height: 12px; }
.ic10 { width: 10px; height: 10px; }

.titlebar { display: flex; align-items: center; gap: 2px; height: 14px; background: #31363b; border-top: 1px solid #45494d; }
.titlebar h1 { flex: 1; margin-left: 1px; }
.winbtns { display: flex; gap: 2px; }
.winbtns button { width: 12px; height: 12px; background: #41464b; }
.winbtns svg { width: 12px; height: 12px; }

.menubar { display: flex; gap: 6px; height: 14px; padding-left: 3px; background: #31363b; border-bottom: 1px solid #25282b; }
.menubar button { line-height: 12px; height: 13px; white-space: nowrap; }
.menubar u { text-underline-offset: 1px; }

.row { display: flex; align-items: center; height: 24px; padding-left: 6px; border-bottom: 1px solid #3c4044; }
.row:nth-child(even) { height: 25px; }
.tb { width: 23px; height: 22px; display: flex; align-items: center; justify-content: center; flex: none; }
.tb svg { width: 18px; height: 18px; }
.tb.blue { fill: #4f82c8; }
.tb.green { fill: #73d216; }
.on { background: #363b40; }
.drop { width: 7px; height: 22px; display: flex; align-items: center; justify-content: center; flex: none; }
.drop::after, .lock i, .combo::after, .pick::after {
  content: "";
  border: 3px solid transparent;
  border-top-color: #eef0f1;
  border-bottom: 0;
}
.drop.dim::after { border-width: 2px 2px 0; border-top-color: #55595c; }
.sep { width: 3px; height: 22px; border-left: 1px solid #1e2124; flex: none; }
.grip { width: 6px; height: 22px; border-left: 1px solid #1e2124; flex: none; }
.combo {
  display: flex; align-items: center; gap: 3px;
  width: 101px; height: 14px; margin-right: 2px; padding: 0 3px 0 2px;
  background: #1b1e20; border: 1px solid #101214; outline: 1px solid #393d41;
}
.combo::after, .pick::after { border-width: 2px 2px 0; }
select { appearance: none; flex: 1; min-width: 0; height: 12px; line-height: 12px; }

.work { flex: 1; display: grid; grid-template-columns: 247px 1fr; min-height: 0; }
.panel { display: flex; flex-direction: column; border-right: 3px solid #1e2225; min-height: 0; }
.panelhead { display: flex; justify-content: space-between; height: 14px; padding-left: 1px; border-top: 1px solid #1d2023; }
.dock { width: 24px; height: 10px; margin-top: 1px; background: #303438; }
.tabs { display: flex; align-items: flex-end; height: 15px; }
.tabs button { height: 13px; padding: 0 6px; border-right: 1px solid #16181a; background: #2a2e32; }
.tabs .cur { height: 15px; background: #31363b; }
.tree { height: 104px; margin: 0 1px 0 1px; background: #1b1e20; border: 1px solid #3d4246; }
table { width: 100%; border-collapse: collapse; table-layout: fixed; }
th { height: 15px; padding: 0 3px; text-align: left; font-weight: 400; background: #31363b; border-right: 1px solid #17191b; border-bottom: 1px solid #17191b; }
th:last-child { border-right: 0; }
.c1 { width: 100px; }
.c2 { width: 59px; }
.p1 { width: 59px; }
td { height: 12px; padding: 0 2px; line-height: 11px; }
.node { display: flex; align-items: center; gap: 3px; line-height: 11px; height: 11px; }
.node svg { margin-right: 1px; }
.tw { width: 8px; text-align: center; font-weight: 400; }
.bold { font-weight: 700; }
.child { padding-left: 22px; }
.props { flex: 1; min-height: 0; margin: 3px 1px 0 1px; background: #1b1e20; border: 1px solid #3d4246; }
.low { height: 15px; align-items: flex-start; }
.low .cur { height: 13px; }
.tabs.low button { padding: 0 7px; }

.stage { display: flex; flex-direction: column; min-width: 0; min-height: 0; padding-left: 1px; }
.view { width: 100%; flex: 1 1 0; min-height: 0; }
.cubetext { font-family: "Liberation Sans", sans-serif; fill: #15191d; stroke: #15191d; stroke-width: .6px; }
.axistext { font-family: "Liberation Sans", sans-serif; font-size: 6px; fill: #222; }
.doctabs { display: flex; height: 15px; border-top: 1px solid #17191b; }
.doctab { display: flex; align-items: center; gap: 2px; padding: 0 5px 0 6px; border-right: 1px solid #17191b; white-space: nowrap; }
.doctab.cur { background: #31363b; }
.doctab button { width: 8px; height: 8px; background: #a9adb0; color: #fff; font-weight: 700; line-height: 8px; }
.doctab.cur button { background: #e0694c; }

.status { display: flex; align-items: stretch; height: 22px; background: #2a2e32; border-top: 1px solid #17191b; border-bottom: 1px solid #4b4f53; line-height: 20px; white-space: nowrap; }
.status p { flex: 1; padding-left: 1px; line-height: 22px; }
.snaps { display: flex; align-items: center; border-left: 1px solid #17191b; }
.snaps button { width: 18px; height: 18px; display: flex; align-items: center; justify-content: center; }
.snaps svg { width: 10px; height: 10px; }
.snaps .lock { width: 24px; gap: 2px; background: #1f2d33; }
.lock i { border-width: 2px 2px 0; }
.pick { display: flex; align-items: center; border-left: 1px solid #17191b; padding-right: 4px; background: #2f3337; }
.pick select { height: 20px; }
.nav { width: 68px; padding-left: 18px; }
.scale { width: 48px; padding-left: 17px; }
.status output { padding: 0 1px 0 2px; border-left: 1px solid #17191b; line-height: 22px; }

.taskbar { display: flex; justify-content: space-between; height: 24px; background: linear-gradient(90deg, #0c1012, #0e1113 26%, #232323 38%, #242323 62%, #101315 76%, #0d1012); }
.apps { display: flex; }
.apps button { width: 25px; height: 24px; display: flex; align-items: center; justify-content: center; }
.apps button:first-child { width: 22px; }
.apps svg { width: 18px; height: 18px; }
.apps .open { border-bottom: 2px solid #b9c6d0; }
.apps .active { background: radial-gradient(circle at 50% 100%, #9a9c9e, transparent 70%); }
.tray { display: flex; align-items: center; gap: 6px; padding-right: 10px; }
.tray svg { width: 12px; height: 12px; }
.lang { font-size: 11px; }
time { display: flex; flex-direction: column; align-items: center; padding-right: 3px; }
time b { font-size: 10px; font-weight: 400; line-height: 12px; }
time span { font-size: 7px; line-height: 9px; }
```
